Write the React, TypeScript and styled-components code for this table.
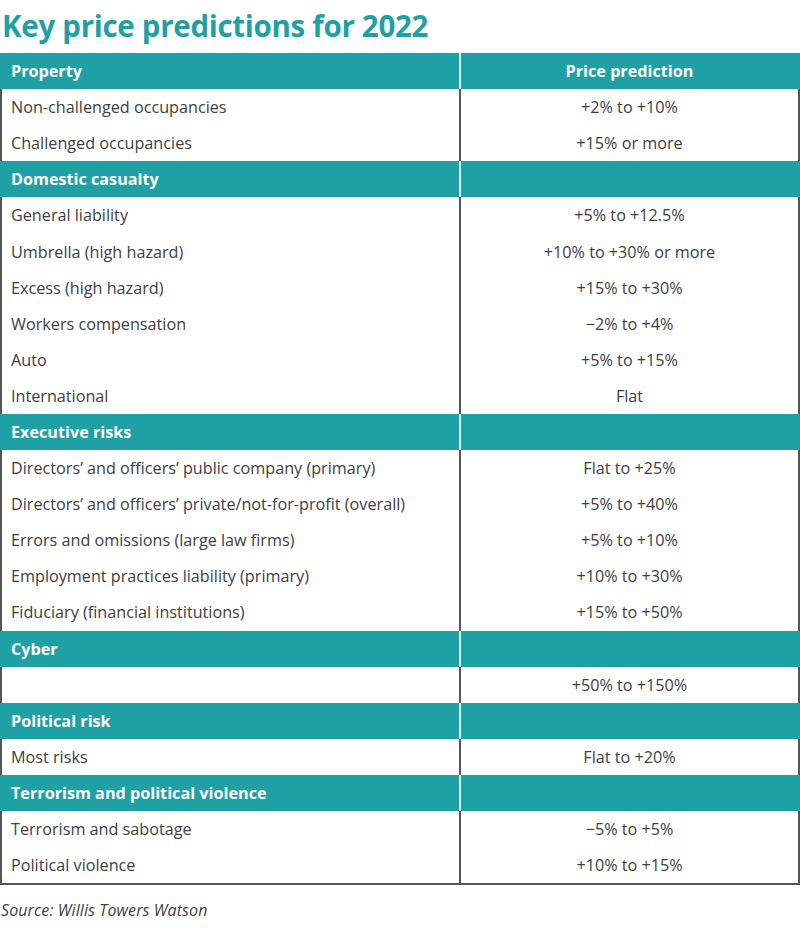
import React from "react";
import styled, { createGlobalStyle } from "styled-components";

const Global = createGlobalStyle`
  html, body { margin: 0; padding: 0; background: #fff; }
  body { font-family: "Open Sans", "Noto Sans", sans-serif; color: #404040; }
`;

const TEAL = "#1fa0a5";
const LINE = "#555555";

const Page = styled.div`
  width: 800px;
  height: 939px;
  display: flex;
  flex-direction: column;
`;

const Title = styled.h1`
  margin: 0;
  padding: 6px 0 0 2px;
  height: 53px;
  box-sizing: border-box;
  font-size: 29.5px;
  font-weight: 700;
  color: ${TEAL};
  letter-spacing: -0.3px;
  line-height: 40px;
`;

const Table = styled.div`
  display: flex;
  flex-direction: column;
  border-bottom: 2px solid ${LINE};
`;

const Row = styled.div<{ $head?: boolean }>`
  display: grid;
  grid-template-columns: 459px 1fr;
  height: 36.1px;
  box-sizing: border-box;
  background: ${(p) => (p.$head ? TEAL : "#fff")};
  border-left: 2px solid ${(p) => (p.$head ? TEAL : LINE)};
  border-right: 2px solid ${(p) => (p.$head ? TEAL : LINE)};
`;

const Cell = styled.div<{ $head?: boolean; $center?: boolean; $first?: boolean }>`
  display: flex;
  align-items: center;
  justify-content: ${(p) => (p.$center ? "center" : "flex-start")};
  padding-left: ${(p) => (p.$center ? "0" : "9px")};
  font-size: 16.2px;
  letter-spacing: 0;
  font-weight: ${(p) => (p.$head ? 700 : 400)};
  color: ${(p) => (p.$head ? "#fff" : "#404040")};
  border-right: ${(p) =>
    p.$first ? `2px solid ${p.$head ? "#d8f6f6" : LINE}` : "none"};
  white-space: nowrap;
`;

const Source = styled.div`
  margin-top: 14px;
  padding-left: 1px;
  font-family: "Open Sans", sans-serif;
  font-style: italic;
  font-size: 16px;
  color: #404040;
  letter-spacing: 0.1px;
`;

type R = { label: string; value?: string; head?: boolean };

const rows: R[] = [
  { label: "Property", value: "Price prediction", head: true },
  { label: "Non-challenged occupancies", value: "+2% to +10%" },
  { label: "Challenged occupancies", value: "+15% or more" },
  { label: "Domestic casualty", value: "", head: true },
  { label: "General liability", value: "+5% to +12.5%" },
  { label: "Umbrella (high hazard)", value: "+10% to +30% or more" },
  { label: "Excess (high hazard)", value: "+15% to +30%" },
  { label: "Workers compensation", value: "\u22122% to +4%" },
  { label: "Auto", value: "+5% to +15%" },
  { label: "International", value: "Flat" },
  { label: "Executive risks", value: "", head: true },
  { label: "Directors\u2019 and officers\u2019 public company (primary)", value: "Flat to +25%" },
  { label: "Directors\u2019 and officers\u2019 private/not-for-profit (overall)", value: "+5% to +40%" },
  { label: "Errors and omissions (large law firms)", value: "+5% to +10%" },
  { label: "Employment practices liability (primary)", value: "+10% to +30%" },
  { label: "Fiduciary (financial institutions)", value: "+15% to +50%" },
  { label: "Cyber", value: "", head: true },
  { label: "", value: "+50% to +150%" },
  { label: "Political risk", value: "", head: true },
  { label: "Most risks", value: "Flat to +20%" },
  { label: "Terrorism and political violence", value: "", head: true },
  { label: "Terrorism and sabotage", value: "\u22125% to +5%" },
  { label: "Political violence", value: "+10% to +15%" },
];

export default function App() {
  return (
    <Page>
      <Global />
      <Title>Key price predictions for 2022</Title>
      <Table>
        {rows.map((r, i) => (
          <Row key={i} $head={r.head}>
            <Cell $head={r.head} $first>
              {r.label}
            </Cell>
            <Cell $head={r.head} $center>
              {r.value}
            </Cell>
          </Row>
        ))}
      </Table>
      <Source>Source: Willis Towers Watson</Source>
    </Page>
  );
}
